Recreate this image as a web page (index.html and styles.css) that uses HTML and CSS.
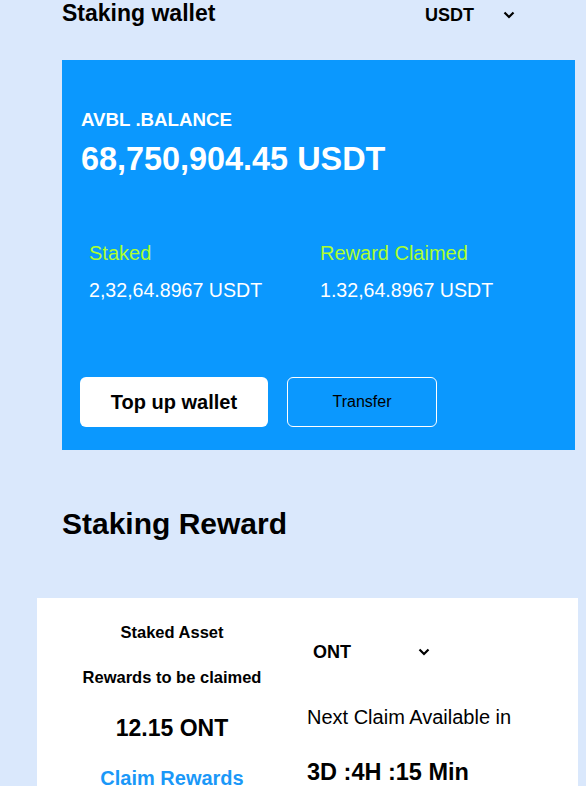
FILE: index.html
```html
<!DOCTYPE html>
<html>
<head>
<meta charset="utf-8">
<link rel="stylesheet" href="styles.css">
</head>
<body>
<div class="page">
  <header class="top">
    <h2 class="title">Staking wallet</h2>
    <div class="select select-top">
      <span>USDT</span>
      <svg class="chev" width="12" height="8" viewBox="0 0 12 8"><path d="M1.5 1.5 L6 6 L10.5 1.5" fill="none" stroke="#000" stroke-width="2.2"/></svg>
    </div>
  </header>

  <section class="wallet">
    <h3 class="avbl">AVBL .BALANCE</h3>
    <h1 class="balance">68,750,904.45 USDT</h1>
    <div class="stats">
      <div class="stat">
        <div class="stat-label">Staked</div>
        <div class="stat-value">2,32,64.8967 USDT</div>
      </div>
      <div class="stat">
        <div class="stat-label">Reward Claimed</div>
        <div class="stat-value">1.32,64.8967 USDT</div>
      </div>
    </div>
    <div class="actions">
      <button class="btn btn-primary">Top up wallet</button>
      <button class="btn btn-outline">Transfer</button>
    </div>
  </section>

  <h2 class="section-title">Staking Reward</h2>
</div>

<section class="reward">
  <div class="col col-left">
    <div class="lbl">Staked Asset</div>
    <div class="lbl lbl2">Rewards to be claimed</div>
    <div class="amount">12.15 ONT</div>
    <a class="claim">Claim Rewards</a>
  </div>
  <div class="col col-right">
    <div class="select select-ont">
      <span>ONT</span>
      <svg class="chev" width="12" height="8" viewBox="0 0 12 8"><path d="M1.5 1.5 L6 6 L10.5 1.5" fill="none" stroke="#000" stroke-width="2.2"/></svg>
    </div>
    <div class="next">Next Claim Available in</div>
    <div class="timer">3D :4H :15 Min</div>
  </div>
</section>
</body>
</html>
```

FILE: styles.css
```css
* { box-sizing: border-box; }
html, body { margin: 0; padding: 0; }
body {
  background: #dae8fc;
  font-family: "Liberation Sans", Arial, sans-serif;
  color: #000;
  width: 586px;
  height: 786px;
  overflow: hidden;
}
.page { padding-left: 62px; }

.top {
  display: flex;
  align-items: baseline;
  padding-top: 2px;
  width: 460px;
}
.title {
  margin: 0;
  font-size: 23px;
  line-height: 1;
  font-weight: bold;
  width: 363px;
}
.select {
  display: flex;
  align-items: center;
  font-weight: bold;
}
.select-top { font-size: 18px; line-height: 1; }
.select-top .chev { margin-left: 29px; }

.wallet {
  margin-top: 35px;
  width: 513px;
  height: 390px;
  background: #0b98fe;
  color: #fff;
  padding: 51px 18px 0 19px;
}
.avbl {
  margin: 0;
  font-size: 18.72px;
  line-height: 1;
  font-weight: bold;
}
.balance {
  margin: 13.5px 0 0;
  font-size: 32.4px;
  line-height: 1;
  font-weight: bold;
}
.stats {
  display: grid;
  grid-template-columns: 231px 1fr;
  padding-left: 8px;
  margin-top: 67px;
}
.stat-label {
  color: #adff2f;
  font-size: 20px;
  line-height: 1;
}
.stat-value {
  margin-top: 18.5px;
  font-size: 19.6px;
  line-height: 1;
}
.actions {
  display: flex;
  gap: 19px;
  margin-top: 76.3px;
  margin-left: -1px;
}
.btn {
  height: 50px;
  border-radius: 6px;
  font-family: "Liberation Sans", Arial, sans-serif;
  cursor: pointer;
}
.btn-primary {
  width: 188px;
  background: #fff;
  border: none;
  font-size: 20px;
  font-weight: bold;
  color: #000;
}
.btn-outline {
  width: 150px;
  background: transparent;
  border: 1px solid #fff;
  font-size: 16px;
  color: #000;
}

.section-title {
  margin: 59px 0 0;
  font-size: 30px;
  line-height: 1;
  font-weight: bold;
}

.reward {
  margin: 59px 0 0 37px;
  width: 541px;
  height: 300px;
  background: #fff;
  display: grid;
  grid-template-columns: 270px 1fr;
  padding-top: 26px;
}
.col-left {
  display: flex;
  flex-direction: column;
  align-items: center;
}
.lbl {
  font-size: 16.5px;
  line-height: 1;
  font-weight: bold;
}
.lbl2 { margin-top: 28.5px; }
.amount {
  margin-top: 31px;
  font-size: 23px;
  line-height: 1;
  font-weight: bold;
}
.claim {
  margin-top: 28px;
  font-size: 20px;
  line-height: 1;
  font-weight: bold;
  color: #1a98f8;
}
.col-right { display: flex; flex-direction: column; }
.select-ont {
  margin-top: 18.7px;
  padding-left: 6px;
  font-size: 18px;
  line-height: 1;
}
.select-ont .chev { margin-left: 67px; }
.next {
  margin-top: 46px;
  font-size: 20px;
  line-height: 1;
}
.timer {
  margin-top: 34.5px;
  font-size: 23.5px;
  line-height: 1;
  font-weight: bold;
}
```
